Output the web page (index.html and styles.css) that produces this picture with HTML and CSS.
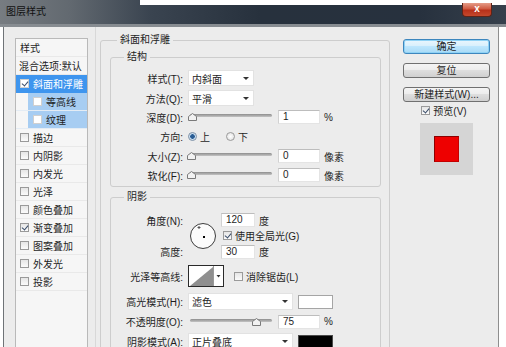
FILE: index.html
```html
<!DOCTYPE html>
<html lang="zh-CN">
<head>
<meta charset="utf-8">
<title>图层样式</title>
<link rel="stylesheet" href="styles.css">
</head>
<body>
<div class="window">
  <div class="titlebar">
    <span class="title">图层样式</span>
    <span class="close">x</span>
  </div>
  <div class="frame">
    <div class="sidebar">
      <div class="list">
        <div class="item header">样式</div>
        <div class="item plain">混合选项:默认</div>
        <div class="item selected"><span class="cb checked light"></span>斜面和浮雕</div>
        <div class="item sub"><span class="sub-bg"><span class="cb light"></span>等高线</span></div>
        <div class="item sub"><span class="sub-bg"><span class="cb light"></span>纹理</span></div>
        <div class="item"><span class="cb"></span>描边</div>
        <div class="item"><span class="cb"></span>内阴影</div>
        <div class="item"><span class="cb"></span>内发光</div>
        <div class="item"><span class="cb"></span>光泽</div>
        <div class="item"><span class="cb"></span>颜色叠加</div>
        <div class="item"><span class="cb checked"></span>渐变叠加</div>
        <div class="item"><span class="cb"></span>图案叠加</div>
        <div class="item"><span class="cb"></span>外发光</div>
        <div class="item"><span class="cb"></span>投影</div>
      </div>
    </div>

    <div class="main">
      <fieldset class="group outer">
        <legend class="legend-outer">斜面和浮雕</legend>

        <fieldset class="group inner structure">
          <legend class="legend-inner">结构</legend>
          <div class="row h16">
            <span class="lbl">样式(T):</span>
            <div class="select w66"><span>内斜面</span><span class="arrow"></span></div>
          </div>
          <div class="row h16">
            <span class="lbl">方法(Q):</span>
            <div class="select w66"><span>平滑</span><span class="arrow"></span></div>
          </div>
          <div class="row h14">
            <span class="lbl">深度(D):</span>
            <div class="slider"><div class="track"></div><svg class="thumb" style="left:1%" width="9" height="8" viewBox="0 0 9 8"><path d="M0.5 7.5V3.5L4.5 0.5L8.5 3.5V7.5Z" fill="#f2f2f2" stroke="#7a7a7a"/></svg></div>
            <span class="num">1</span>
            <span class="unit">%</span>
          </div>
          <div class="row h16">
            <span class="lbl">方向:</span>
            <span class="radio on"></span><span class="rtext">上</span>
            <span class="radio gap"></span><span class="rtext">下</span>
          </div>
          <div class="row h16">
            <span class="lbl">大小(Z):</span>
            <div class="slider"><div class="track"></div><svg class="thumb" style="left:0%" width="9" height="8" viewBox="0 0 9 8"><path d="M0.5 7.5V3.5L4.5 0.5L8.5 3.5V7.5Z" fill="#f2f2f2" stroke="#7a7a7a"/></svg></div>
            <span class="num">0</span>
            <span class="unit">像素</span>
          </div>
          <div class="row h14">
            <span class="lbl">软化(F):</span>
            <div class="slider"><div class="track"></div><svg class="thumb" style="left:0%" width="9" height="8" viewBox="0 0 9 8"><path d="M0.5 7.5V3.5L4.5 0.5L8.5 3.5V7.5Z" fill="#f2f2f2" stroke="#7a7a7a"/></svg></div>
            <span class="num">0</span>
            <span class="unit">像素</span>
          </div>
        </fieldset>

        <fieldset class="group inner shading">
          <legend class="legend-inner">阴影</legend>
          <div class="angle-block">
            <span class="lbl a-lbl1">角度(N):</span>
            <span class="lbl a-lbl2">高度:</span>
            <svg class="dial" width="28" height="28" viewBox="0 0 28 28">
              <circle cx="14" cy="14" r="12.5" fill="#fbfbfb" stroke="#3c3c3c" stroke-width="1"/>
              <rect x="14" y="14" width="2" height="2" fill="#000"/>
              <path d="M10 4v3M8.5 5.5h3" stroke="#555" stroke-width="1"/>
            </svg>
            <div class="a-val1"><span class="num w34">120</span><span class="unit">度</span></div>
            <div class="a-check"><span class="cb checked"></span><span class="ctext">使用全局光(G)</span></div>
            <div class="a-val2"><span class="num w34">30</span><span class="unit">度</span></div>
          </div>
          <div class="row h22">
            <span class="lbl">光泽等高线:</span>
            <svg class="contour" width="36" height="22" viewBox="0 0 36 22">
              <rect x="0.5" y="0.5" width="35" height="21" fill="#fff" stroke="#2a2a2a"/>
              <path d="M2 21L25 2V21Z" fill="#8f8f8f"/>
              <path d="M25.5 1v20" stroke="#9a9a9a"/>
              <path d="M28.5 10h4l-2 2.5z" fill="#333"/>
            </svg>
            <span class="cb anti"></span><span class="ctext">消除锯齿(L)</span>
          </div>
          <div class="modes">
            <div class="row h17">
              <span class="lbl">高光模式(H):</span>
              <div class="select w105"><span>滤色</span><span class="arrow"></span></div>
              <span class="swatch white"></span>
            </div>
            <div class="row h17">
              <span class="lbl">不透明度(O):</span>
              <div class="slider"><div class="track"></div><svg class="thumb" style="left:75%" width="9" height="8" viewBox="0 0 9 8"><path d="M0.5 7.5V3.5L4.5 0.5L8.5 3.5V7.5Z" fill="#f2f2f2" stroke="#7a7a7a"/></svg></div>
              <span class="num">75</span>
              <span class="unit">%</span>
            </div>
            <div class="row h17">
              <span class="lbl">阴影模式(A):</span>
              <div class="select w105"><span>正片叠底</span><span class="arrow"></span></div>
              <span class="swatch black"></span>
            </div>
          </div>
        </fieldset>
      </fieldset>
    </div>

    <div class="actions">
      <div class="btn default">确定</div>
      <div class="btn">复位</div>
      <div class="btn">新建样式(W)...</div>
      <div class="preview-check"><span class="cb checked"></span><span class="ctext">预览(V)</span></div>
      <div class="preview-box"><span class="red"></span></div>
    </div>
  </div>
</div>
</body>
</html>
```

FILE: styles.css
```css
* { box-sizing: border-box; }
html, body { margin: 0; padding: 0; }
body {
  width: 506px;
  height: 347px;
  overflow: hidden;
  background: #ffffff;
  font-family: "Liberation Sans", "Noto Sans CJK SC", sans-serif;
  font-size: 10px;
  color: #1e1e1e;
}
.window {
  width: 506px;
  height: 347px;
  display: flex;
  flex-direction: column;
}
.titlebar {
  height: 27px;
  flex: none;
  display: flex;
  align-items: flex-start;
  border-bottom: 3px solid #878c91;
  background:
    linear-gradient(#ffffff, #ffffff) 140px 0 / 366px 5px no-repeat,
    linear-gradient(to right, #777c81 0, #626970 70px, #3a4450 150px, #27313d 260px, #27313e 420px, #36404c 506px);
}
.title {
  margin: 5px 0 0 6px;
  line-height: 14px;
  color: #111;
}
.close {
  margin: 3px 14px 0 auto;
  width: 30px;
  height: 14px;
  border: 1px solid #5e2418;
  border-top: none;
  border-radius: 0 0 4px 4px;
  background: linear-gradient(#e59c88, #cf5a41 45%, #b8311a 55%, #c4482c);
  color: #fff;
  font-weight: bold;
  line-height: 12px;
  text-align: center;
}
.frame {
  flex: 1;
  min-height: 0;
  margin: 0 7px 0 3px;
  border-left: 1px solid #6f7377;
  border-right: 1px solid #8e8e8e;
  background: #ececec;
  display: flex;
  overflow: hidden;
}

/* sidebar */
.sidebar {
  flex: none;
  width: 84px;
  margin-right: 7px;
  padding: 11px 0 0 11px;
}
.list {
  width: 73px;
  height: 330px;
  border: 1px solid #b9b9b9;
  background: #f6f6f6;
}
.item {
  height: 18px;
  border-bottom: 1px solid #e9e9e9;
  display: flex;
  align-items: center;
  padding-left: 4px;
  white-space: nowrap;
}
.item .cb { margin-right: 4px; }
.item.header { padding-left: 4px; align-items: flex-start; padding-top: 1px; }
.item.plain { padding-left: 3px; }
.item.selected {
  background: #3e95ee;
  color: #fff;
  border-bottom-color: #3e95ee;
}
.item.sub { padding-left: 12px; border-bottom-color: #e4ecf4; }
.sub-bg {
  align-self: stretch;
  flex: 1;
  display: flex;
  align-items: center;
  padding-left: 5px;
  background: #a7cdf2;
}
.cb {
  flex: none;
  width: 9px;
  height: 9px;
  border: 1px solid #9a9a9a;
  background: linear-gradient(#e6e6e6, #fbfbfb);
  position: relative;
}
.cb.light { border-color: #d0d0d0; background: #ffffff; }
.cb.checked::after {
  content: "";
  position: absolute;
  left: 2px;
  top: 0px;
  width: 3px;
  height: 5px;
  border: solid #3a4d6a;
  border-width: 0 1.5px 1.5px 0;
  transform: rotate(40deg);
}

/* main */
.main {
  flex: none;
  width: 295px;
  border-left: 1px solid #d8d8d8;
  padding: 6px 0 0 4px;
}
fieldset.group {
  margin: 0;
  min-width: 0;
  border: 1px solid #cdcdcd;
  border-radius: 3px;
}
legend {
  padding: 0 3px;
  line-height: 14px;
}
.outer {
  width: 290px;
  height: 330px;
  padding: 3px 8px 0 9px;
  display: flex;
  flex-direction: column;
  gap: 3px;
}
.legend-outer { margin-left: 7px; }
.inner { padding: 0; display: flex; flex-direction: column; }
.legend-inner { margin-left: 13px; }
.structure { padding: 6px 0 4px 0; gap: 4px; }
.shading { padding: 9px 0 0 0; gap: 6px; flex: 1; }

.row {
  display: flex;
  align-items: center;
  white-space: nowrap;
}
.h14 { height: 14px; }
.h16 { height: 16px; }
.h17 { height: 17px; }
.h22 { height: 22px; }
.lbl {
  flex: none;
  width: 72px;
  margin-right: 5px;
  text-align: right;
}
.select {
  height: 100%;
  background: #ffffff;
  border: 1px solid #e2e2e2;
  display: flex;
  align-items: center;
  justify-content: space-between;
  padding: 0 4px 0 3px;
}
.w66 { width: 66px; }
.w105 { width: 105px; }
.arrow {
  width: 0;
  height: 0;
  border-left: 3px solid transparent;
  border-right: 3px solid transparent;
  border-top: 3px solid #333;
}
.slider {
  position: relative;
  flex: none;
  width: 86px;
  height: 14px;
  margin-right: 4px;
}
.track {
  position: absolute;
  left: 2px;
  right: 2px;
  top: 4px;
  height: 3px;
  border-radius: 2px;
  background: linear-gradient(#8d8d8d, #c4c4c4);
}
.thumb {
  position: absolute;
  top: 3px;
  margin-left: -1px;
}
.num {
  flex: none;
  width: 42px;
  height: 14px;
  background: #ffffff;
  border: 1px solid;
  border-color: #bdbdbd #e4e4e4 #e4e4e4 #d2d2d2;
  padding-left: 4px;
  line-height: 12px;
}
.num.w34 { width: 34px; }
.unit { margin-left: 4px; }
.radio {
  flex: none;
  width: 9px;
  height: 9px;
  border: 1px solid #9a9a9a;
  border-radius: 50%;
  background: radial-gradient(#ffffff, #dcdcdc);
}
.radio.on { background: radial-gradient(circle, #2b5d93 0 2px, #b7d4ee 2.5px, #f4f4f4 4px); border-color: #7a8fa6; }
.radio.gap { margin-left: 16px; }
.rtext { margin-left: 3px; }

.angle-block {
  display: grid;
  grid-template-columns: 72px 28px auto;
  grid-template-rows: 14px 17px 15px;
  column-gap: 5px;
  align-items: center;
}
.a-lbl1 { grid-column: 1; grid-row: 1; }
.a-lbl2 { grid-column: 1; grid-row: 3; }
.dial { grid-column: 2; grid-row: 1 / 4; align-self: center; margin-left: 1px; }
.a-val1, .a-val2, .a-check {
  grid-column: 3;
  display: flex;
  align-items: center;
  white-space: nowrap;
}
.a-val1 { grid-row: 1; }
.a-check { grid-row: 2; padding-left: 2px; }
.a-val2 { grid-row: 3; }
.ctext { margin-left: 3px; }
.contour { flex: none; }
.cb.anti { margin-left: 10px; }
.modes { display: flex; flex-direction: column; gap: 3px; }
.swatch {
  flex: none;
  width: 35px;
  height: 14px;
  margin-left: 5px;
  border: 1px solid #a5a5a5;
}
.swatch.white { background: #ffffff; }
.swatch.black { background: #000000; border-color: #4a4a4a; }

/* actions */
.actions {
  flex: none;
  width: 87px;
  margin-left: 13px;
  padding-top: 12px;
  display: flex;
  flex-direction: column;
  align-items: center;
}
.btn {
  width: 87px;
  height: 15px;
  margin-bottom: 9px;
  border: 1px solid #707070;
  border-radius: 3px;
  background: linear-gradient(#f4f4f4 0, #ececec 50%, #dedede 50%, #d0d0d0 100%);
  text-align: center;
  line-height: 13px;
  white-space: nowrap;
}
.btn.default {
  border-color: #3d86bd;
  background: linear-gradient(#eaf6fd 0, #d7effc 50%, #bde6fd 50%, #a8daf6 100%);
  box-shadow: inset 0 0 0 1px #8fd2f5;
}
.preview-check {
  margin-top: -8px;
  height: 14px;
  display: flex;
  align-items: center;
  margin-right: 5px;
}
.preview-box {
  margin-top: 6px;
  width: 53px;
  height: 52px;
  background: #d5d5d5;
  display: flex;
  align-items: center;
  justify-content: center;
}
.red {
  width: 25px;
  height: 26px;
  background: #ee0000;
  border: 1px solid #8c0000;
  border-right-color: #c40000;
  border-bottom-color: #c40000;
}
```
